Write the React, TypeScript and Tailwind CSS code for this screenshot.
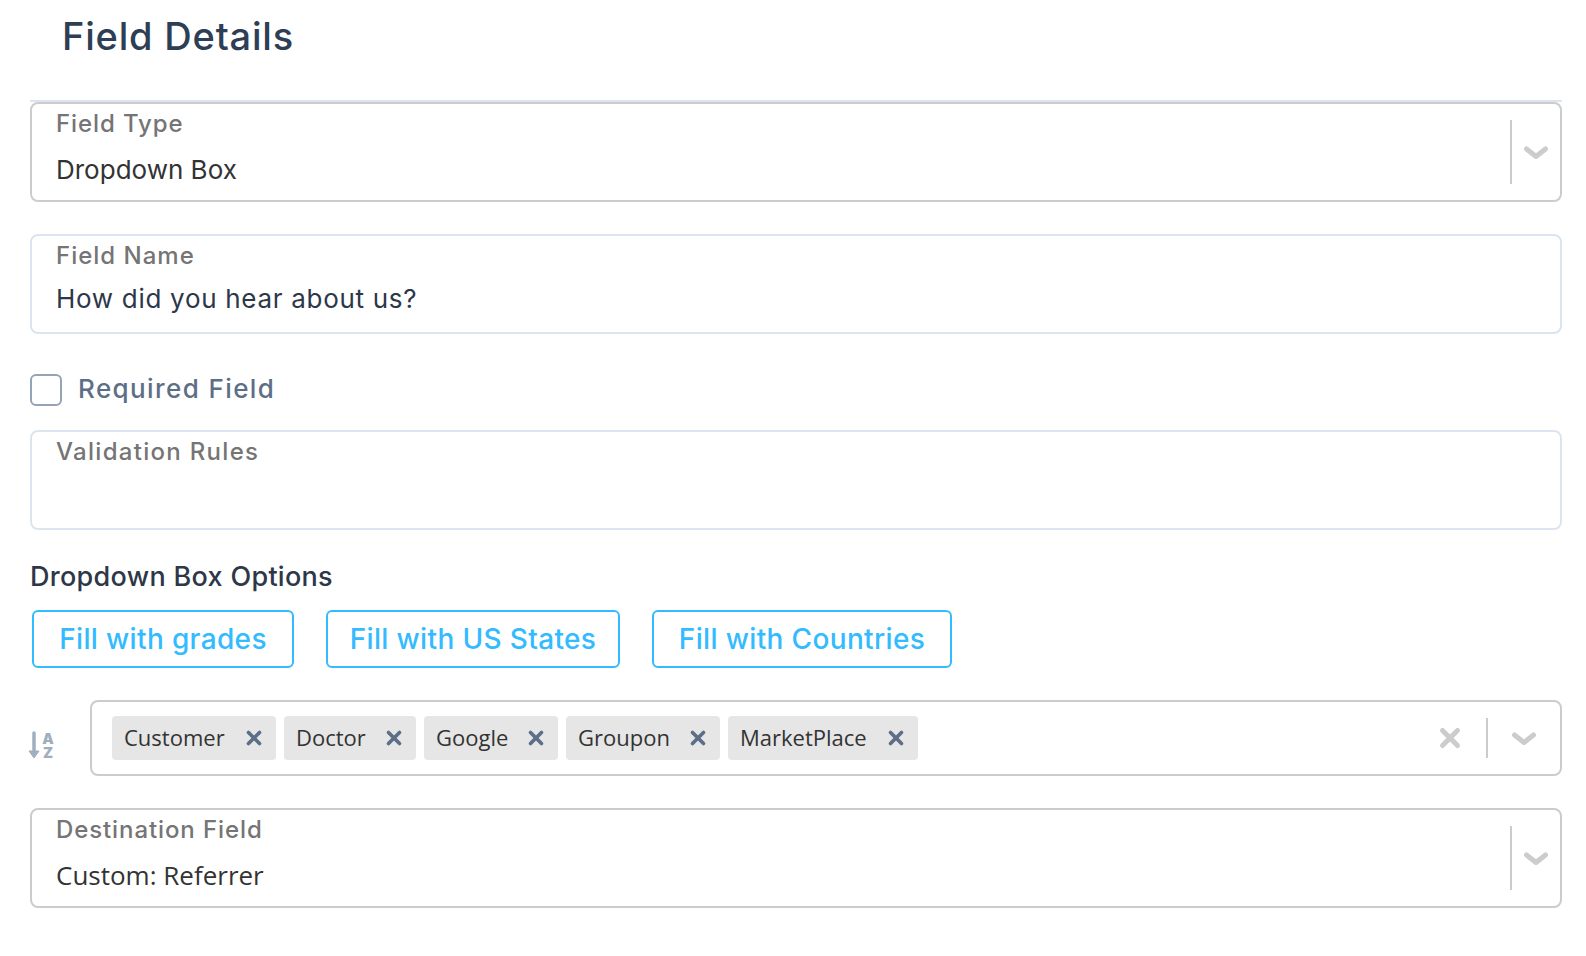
import { X } from 'lucide-react';

const Chevron = () => (
  <svg width="24" height="14" viewBox="0 0 24 14" fill="none" className="shrink-0">
    <path d="M2.5 3 L12 10.5 L21.5 3" stroke="#cccccc" strokeWidth="5" strokeLinecap="round" strokeLinejoin="round" />
  </svg>
);

const SelectField = ({ label, value, valueClass, className }: { label: string; value: string; valueClass: string; className?: string }) => (
  <div className={`h-[100px] rounded-lg border-2 border-[#cccccc] bg-white flex items-stretch ${className ?? ''}`}>
    <div className="flex-1 pl-[24px] pt-[5px]">
      <div className="text-[24px] leading-[30px] text-[#757575] font-medium tracking-[0.9px]">{label}</div>
      <div className={`mt-[15px] text-[#333333] ${valueClass}`}>{value}</div>
    </div>
    <div className="flex items-center">
      <div className="w-[2px] h-[64px] bg-[#cccccc]" />
      <div className="w-[48px] flex justify-center pt-[1px]">
        <Chevron />
      </div>
    </div>
  </div>
);

const InputField = ({ label, value, labelClass, className }: { label: string; value?: string; labelClass?: string; className?: string }) => (
  <div className={`h-[100px] rounded-lg border-2 border-[#dbe5f1] bg-white pl-[24px] pt-[5px] ${className ?? ''}`}>
    <div className={`text-[24px] leading-[30px] text-[#757575] font-medium ${labelClass ?? 'tracking-[1px]'}`}>{label}</div>
    {value && <div className="mt-[12px] text-[26px] leading-[32px] text-[#2d3748] tracking-[0.7px]">{value}</div>}
  </div>
);

const Tag = ({ text, width }: { text: string; width: string }) => (
  <div className={`h-[44px] rounded-[4px] bg-[#e6e6e6] flex items-center justify-between pl-[12px] pr-[11px] ${width}`}>
    <span className="font-['Open_Sans',sans-serif] text-[22px] leading-[30px] pb-[2px] text-[#333333]">{text}</span>
    <X size={22} strokeWidth={4} className="text-[#5d6f86]" />
  </div>
);

const FillButton = ({ text, width }: { text: string; width: string }) => (
  <button className={`h-[58px] rounded-md border-2 border-[#33bbff] bg-white text-[#33bbff] text-[28px] font-medium tracking-[0.35px] ${width}`}>
    {text}
  </button>
);

export default function App() {
  return (
    <div className="w-[1586px] h-[956px] bg-white overflow-hidden font-['Inter','Liberation_Sans',sans-serif]">
      <div className="pl-[62px] pt-[10px] h-[100px] text-[#2d3e55] text-[38px] leading-[52px] font-medium tracking-[0.8px]">Field Details</div>
      <div className="ml-[30px] w-[1532px]">
        <div className="h-[2px] bg-[#dbe5f1]" />
        <SelectField label="Field Type" value="Dropdown Box" valueClass="text-[26px] leading-[32px]" />
        <InputField label="Field Name" value="How did you hear about us?" className="mt-[32px]" />

        <div className="mt-[40px] h-[32px] flex items-center">
          <div className="w-[32px] h-[32px] rounded-md border-2 border-[#94a3b8] bg-white" />
          <span className="ml-[16px] pb-[4px] text-[#5d6f86] text-[26px] font-medium tracking-[1.4px]">Required Field</span>
        </div>

        <InputField label="Validation Rules" labelClass="tracking-[1.3px]" className="mt-[24px]" />

        <div className="mt-[28px] h-[38px] text-[#2d3748] text-[27px] leading-[38px] font-medium tracking-[0.3px]">Dropdown Box Options</div>

        <div className="mt-[14px] pl-[2px] flex gap-[32px]">
          <FillButton text="Fill with grades" width="w-[262px]" />
          <FillButton text="Fill with US States" width="w-[294px]" />
          <FillButton text="Fill with Countries" width="w-[300px]" />
        </div>

        <div className="mt-[32px] flex items-center">
          <div className="w-[60px] pt-[17px]">
            <svg width="30" height="36" viewBox="0 0 30 36" fill="none" className="-ml-[2px]">
              <path d="M6 4 V25" stroke="#a0aec0" strokeWidth="3.5" strokeLinecap="round" />
              <path d="M1 22 H11 L6 29 Z" fill="#a0aec0" stroke="#a0aec0" strokeLinejoin="round" />
              <text x="20" y="15" textAnchor="middle" fontSize="14.5" fontWeight="900" fill="#a0aec0">A</text>
              <text x="20" y="29" textAnchor="middle" fontSize="14.5" fontWeight="900" fill="#a0aec0">Z</text>
            </svg>
          </div>
          <div className="flex-1 h-[76px] rounded-lg border-2 border-[#cccccc] flex items-center pl-[20px]">
            <div className="flex-1 flex gap-[8px]">
              <Tag text="Customer" width="w-[164px]" />
              <Tag text="Doctor" width="w-[132px]" />
              <Tag text="Google" width="w-[134px]" />
              <Tag text="Groupon" width="w-[154px]" />
              <Tag text="MarketPlace" width="w-[190px]" />
            </div>
            <X size={30} strokeWidth={4} className="text-[#cccccc] mr-[21px]" />
            <div className="w-[2px] h-[40px] bg-[#cccccc]" />
            <div className="w-[72px] flex justify-center pt-[1px]">
              <Chevron />
            </div>
          </div>
        </div>

        <SelectField label="Destination Field" value="Custom: Referrer" valueClass="font-['Open_Sans',sans-serif] text-[26px] leading-[30px]" className="mt-[32px]" />
      </div>
    </div>
  );
}
